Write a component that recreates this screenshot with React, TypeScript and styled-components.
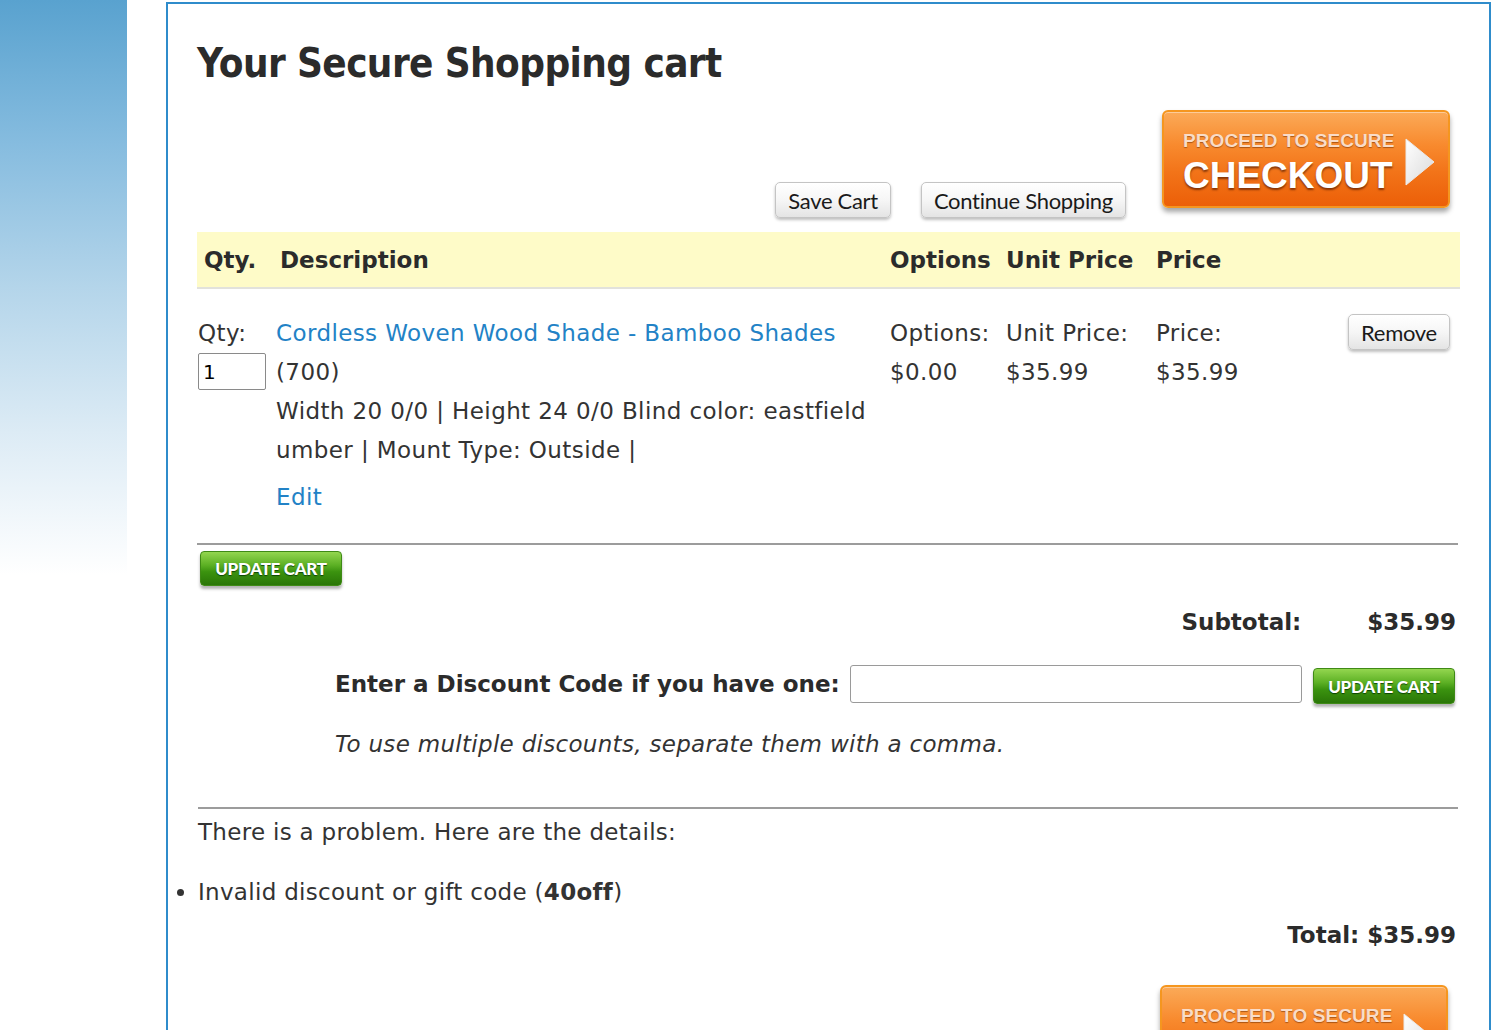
import React from 'react';
import styled, { createGlobalStyle } from 'styled-components';

const GlobalStyle = createGlobalStyle`
  html, body { margin: 0; padding: 0; background: #ffffff; }
  body {
    font-family: "DejaVu Sans", "Liberation Sans", sans-serif;
    color: #333333;
    overflow: hidden;
  }
  * { box-sizing: border-box; }
`;

const Page = styled.div`
  display: flex;
  align-items: flex-start;
  height: 1030px;
  overflow: hidden;
`;

const Sidebar = styled.aside`
  flex: none;
  width: 127px;
  height: 575px;
  background: linear-gradient(
    to bottom,
    #59a2cf 0%,
    #86bcdf 25%,
    #b4d5ea 50%,
    #dcebf5 75%,
    #ffffff 100%
  );
`;

const Panel = styled.main`
  flex: none;
  margin-left: 39px;
  margin-top: 2px;
  width: 1325px;
  min-height: 1100px;
  border: 2px solid #2f8ccb;
  padding: 35px 29px 0 29px;
`;

const Title = styled.h1`
  margin: 0;
  font-family: "DejaVu Sans Condensed", "DejaVu Sans", sans-serif;
  font-stretch: condensed;
  font-size: 40px;
  line-height: 48px;
  font-weight: bold;
  color: #2b2b2b;
  letter-spacing: -0.6px;
`;

const Toolbar = styled.div`
  display: flex;
  justify-content: flex-end;
  align-items: flex-start;
  margin-top: 23px;
  padding-right: 10px;
`;

const ToolGroup = styled.div`
  display: flex;
  gap: 30px;
  padding-top: 72px;
  margin-right: 36px;
`;

const GrayButton = styled.button`
  height: 36px;
  padding: 0 12px;
  border: 1px solid #c4c4c4;
  border-radius: 5px;
  background: linear-gradient(to bottom, #ffffff 0%, #f6f6f6 50%, #e4e4e4 100%);
  box-shadow: 0 2px 3px rgba(0, 0, 0, 0.25);
  font-family: "Lato", "Open Sans", sans-serif;
  font-size: 22px;
  color: #1a1a1a;
  letter-spacing: -0.3px;
  cursor: pointer;
`;

const CheckoutButton = styled.button`
  position: relative;
  width: 288px;
  height: 98px;
  padding: 7px 0 0 19px;
  border: 2px solid #f5961f;
  border-radius: 6px;
  background: linear-gradient(to bottom, #fbaa58 0%, #f88a2e 35%, #f27318 65%, #ec5f08 100%);
  box-shadow: 0 4px 5px rgba(0, 0, 0, 0.35), inset 0 1px 0 rgba(255, 255, 255, 0.4);
  font-family: "Liberation Sans", Arial, sans-serif;
  font-weight: bold;
  text-align: left;
  display: flex;
  flex-direction: column;
  justify-content: center;
  cursor: pointer;
`;

const CheckoutSmall = styled.span`
  display: block;
  font-size: 19px;
  line-height: 22px;
  color: #f9dcc8;
  text-shadow: 0 1px 1px rgba(120, 50, 0, 0.6);
  letter-spacing: 0.1px;
`;

const CheckoutBig = styled.span`
  display: block;
  margin-top: 4px;
  font-size: 37px;
  line-height: 40px;
  color: #ffffff;
  text-shadow: 0 2px 2px rgba(90, 30, 0, 0.7);
`;

const Arrow = styled.svg`
  position: absolute;
  right: 12px;
  top: 25px;
`;

const HeaderRow = styled.div`
  display: grid;
  grid-template-columns: 76px 610px 116px 150px 1fr;
  align-items: center;
  height: 57px;
  margin-top: 14px;
  background: #fefbc8;
  border-bottom: 2px solid #e2e2dc;
  font-size: 23px;
  font-weight: bold;
  color: #2b2b2b;
`;

const HeaderCell = styled.div`
  padding-left: 7px;
`;

const ItemRow = styled.div`
  display: grid;
  grid-template-columns: 78px 614px 116px 150px 1fr auto;
  padding: 25px 8px 26px 1px;
  border-bottom: 2px solid #9c9c9c;
  margin-right: 2px;
  font-size: 23px;
  line-height: 39px;
  letter-spacing: 0.4px;
`;

const Cell = styled.div`
  display: flex;
  flex-direction: column;
  align-items: flex-start;
`;

const QtyInput = styled.input`
  width: 68px;
  height: 37px;
  margin-top: 0;
  border: 1px solid #8a8a8a;
  border-radius: 2px;
  padding: 0 4px;
  font-family: "DejaVu Sans", sans-serif;
  font-size: 20px;
  color: #000;
`;

const ProductLink = styled.a`
  color: #2282c6;
  text-decoration: none;
`;

const EditLink = styled.a`
  margin-top: 8px;
  color: #2282c6;
  text-decoration: none;
`;

const RemoveButton = styled(GrayButton)`
  padding: 0 10px;
  width: 102px;
  letter-spacing: -0.3px;
`;

const GreenButton = styled.button`
  width: 142px;
  height: 35px;
  padding: 0;
  border: 1px solid #3f8a16;
  border-radius: 4px;
  background: linear-gradient(to bottom, #93d64f 0%, #5cb024 40%, #3b930f 60%, #2a7607 100%);
  box-shadow: 0 3px 3px rgba(0, 0, 0, 0.3);
  font-family: "Lato", "Open Sans", sans-serif;
  font-weight: 900;
  font-size: 17px;
  letter-spacing: -0.3px;
  color: #ffffff;
  text-shadow: 0 1px 1px rgba(0, 50, 0, 0.8);
  cursor: pointer;
`;

const UpdateWrap = styled.div`
  margin-top: 6px;
  padding-left: 3px;
`;

const SummaryRow = styled.div`
  display: flex;
  justify-content: flex-end;
  gap: 66px;
  margin-top: 17px;
  padding-right: 4px;
  font-size: 23px;
  line-height: 39px;
  font-weight: bold;
  color: #2b2b2b;
`;

const DiscountBlock = styled.div`
  padding-left: 138px;
  margin-top: 21px;
`;

const DiscountRow = styled.div`
  display: flex;
  align-items: center;
  font-size: 23px;
  font-weight: bold;
  color: #2b2b2b;
`;

const DiscountLabel = styled.label`
  flex: 1;
  white-space: nowrap;
`;

const DiscountInput = styled.input`
  width: 452px;
  height: 38px;
  margin-left: 10px;
  border: 1px solid #9a9a9a;
  border-radius: 3px;
`;

const DiscountButton = styled(GreenButton)`
  margin-left: 11px;
  margin-right: 5px;
  height: 36px;
  margin-top: 5px;
`;

const Hint = styled.p`
  margin: 21px 0 0 0;
  font-size: 23px;
  line-height: 39px;
  font-style: italic;
  letter-spacing: 0.3px;
`;

const Divider = styled.hr`
  margin: 43px 2px 0 1px;
  border: 0;
  border-top: 2px solid #9c9c9c;
`;

const Message = styled.p`
  margin: 4px 0 0 1px;
  font-size: 23px;
  line-height: 39px;
  letter-spacing: 0.3px;
`;

const ErrorList = styled.ul`
  margin: 21px 0 0 0;
  padding-left: 1px;
  font-size: 23px;
  line-height: 39px;
  list-style: disc outside;
  letter-spacing: 0.3px;
`;

const Total = styled.div`
  margin-top: 4px;
  padding-right: 4px;
  text-align: right;
  font-size: 23px;
  line-height: 39px;
  font-weight: bold;
  color: #2b2b2b;
`;

const BottomBar = styled.div`
  display: flex;
  justify-content: flex-end;
  margin-top: 30px;
  padding-right: 12px;
`;

function Checkout() {
  return (
    <CheckoutButton type="button">
      <CheckoutSmall>PROCEED TO SECURE</CheckoutSmall>
      <CheckoutBig>CHECKOUT</CheckoutBig>
      <Arrow width="32" height="50" viewBox="0 0 32 50">
        <defs>
          <linearGradient id="arrowGrad" x1="0" y1="0" x2="1" y2="1">
            <stop offset="0" stopColor="#ffffff" />
            <stop offset="1" stopColor="#d9d9d9" />
          </linearGradient>
        </defs>
        <polygon points="2,2 30,25 2,48" fill="url(#arrowGrad)" stroke="#e9e9e9" strokeWidth="1" />
      </Arrow>
    </CheckoutButton>
  );
}

export default function App() {
  return (
    <>
      <GlobalStyle />
      <Page>
        <Sidebar />
        <Panel>
          <Title>Your Secure Shopping cart</Title>
          <Toolbar>
            <ToolGroup>
              <GrayButton type="button">Save Cart</GrayButton>
              <GrayButton type="button">Continue Shopping</GrayButton>
            </ToolGroup>
            <Checkout />
          </Toolbar>

          <HeaderRow>
            <HeaderCell>Qty.</HeaderCell>
            <HeaderCell>Description</HeaderCell>
            <HeaderCell>Options</HeaderCell>
            <HeaderCell>Unit Price</HeaderCell>
            <HeaderCell>Price</HeaderCell>
          </HeaderRow>

          <ItemRow>
            <Cell>
              <span>Qty:</span>
              <QtyInput defaultValue="1" />
            </Cell>
            <Cell>
              <ProductLink href="#">Cordless Woven Wood Shade - Bamboo Shades</ProductLink>
              <span>(700)</span>
              <span>Width 20 0/0 | Height 24 0/0 Blind color: eastfield umber | Mount Type: Outside |</span>
              <EditLink href="#">Edit</EditLink>
            </Cell>
            <Cell>
              <span>Options:</span>
              <span>$0.00</span>
            </Cell>
            <Cell>
              <span>Unit Price:</span>
              <span>$35.99</span>
            </Cell>
            <Cell>
              <span>Price:</span>
              <span>$35.99</span>
            </Cell>
            <Cell>
              <RemoveButton type="button">Remove</RemoveButton>
            </Cell>
          </ItemRow>

          <UpdateWrap>
            <GreenButton type="button">UPDATE CART</GreenButton>
          </UpdateWrap>

          <SummaryRow>
            <span>Subtotal:</span>
            <span>$35.99</span>
          </SummaryRow>

          <DiscountBlock>
            <DiscountRow>
              <DiscountLabel>Enter a Discount Code if you have one:</DiscountLabel>
              <DiscountInput />
              <DiscountButton type="button">UPDATE CART</DiscountButton>
            </DiscountRow>
            <Hint>To use multiple discounts, separate them with a comma.</Hint>
          </DiscountBlock>

          <Divider />
          <Message>There is a problem. Here are the details:</Message>
          <ErrorList>
            <li>
              Invalid discount or gift code (<b>40off</b>)
            </li>
          </ErrorList>
          <Total>Total: $35.99</Total>
          <BottomBar>
            <Checkout />
          </BottomBar>
        </Panel>
      </Page>
    </>
  );
}
